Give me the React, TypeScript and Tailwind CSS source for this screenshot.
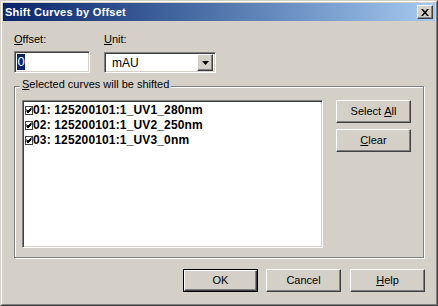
import React from 'react';

const raised =
  'border border-t-white border-l-white border-r-[#404040] border-b-[#404040] shadow-[inset_-1px_-1px_0_#808080] bg-[#d4d0c8]';
const sunken =
  'border border-t-[#808080] border-l-[#808080] border-r-white border-b-white shadow-[inset_1px_1px_0_#404040,inset_-1px_-1px_0_#d4d0c8]';

const curves = ['01: 125200101:1_UV1_280nm', '02: 125200101:1_UV2_250nm', '03: 125200101:1_UV3_0nm'];

const Btn: React.FC<{ children: React.ReactNode; className?: string }> = ({ children, className = '' }) => (
  <div className={`w-[75px] h-[23px] flex items-center justify-center leading-none ${raised} ${className}`}>
    {children}
  </div>
);

const Check = () => (
  <svg width="8" height="9" viewBox="0 0 8 9" className="shrink-0">
    <rect x="0.5" y="0.5" width="7" height="8" fill="white" stroke="#404040" />
    <path d="M1.5 3.5 L3 5 L6.5 1.5 M1.5 4.5 L3 6 L6.5 2.5 M1.5 5.5 L3 7 L6.5 3.5" stroke="black" strokeWidth="1" fill="none" />
  </svg>
);

export default function App() {
  return (
    <div className="w-[438px] h-[306px] bg-[#d4d0c8] font-['Liberation_Sans',Arial,sans-serif] text-[11px] text-black border border-t-[#d4d0c8] border-l-[#d4d0c8] border-r-[#404040] border-b-[#404040] select-none">
      <div className="h-full border border-t-white border-l-white border-r-[#808080] border-b-[#808080] p-px flex flex-col">
        {/* title bar */}
        <div className="h-[18px] shrink-0 flex items-center justify-between px-[2px] bg-gradient-to-r from-[#0a246a] to-[#a6caf0]">
          <span className="text-white font-bold text-[11px] tracking-[0.25px] leading-none">Shift Curves by Offset</span>
          <div className={`w-[16px] h-[14px] flex items-center justify-center ${raised}`}>
            <svg width="8" height="7" viewBox="0 0 8 7">
              <path d="M0 0 L2 0 L4 2.5 L6 0 L8 0 L5 3.5 L8 7 L6 7 L4 4.5 L2 7 L0 7 L3 3.5 Z" fill="black" />
            </svg>
          </div>
        </div>

        {/* offset / unit */}
        <div className="flex items-start mt-[12px] ml-[11px] gap-[14px]">
          <div className="flex flex-col">
            <span className="leading-[13px]">
              <u>O</u>ffset:
            </span>
            <div className={`mt-[5px] w-[76px] h-[22px] bg-white flex items-center pl-[2px] ${sunken}`}>
              <span className="bg-[#0a246a] text-white w-[8px] text-center leading-[16px] text-[13px]">0</span>
            </div>
          </div>
          <div className="flex flex-col">
            <span className="leading-[13px]">
              <u>U</u>nit:
            </span>
            <div className={`mt-[6px] w-[112px] h-[21px] bg-white flex items-center justify-between ${sunken} p-[2px]`}>
              <span className="pl-[5px] text-[12px]">mAU</span>
              <div className={`w-[16px] h-[17px] flex items-center justify-center ${raised}`}>
                <svg width="7" height="4" viewBox="0 0 7 4">
                  <path d="M0 0 H7 L3.5 4 Z" fill="black" />
                </svg>
              </div>
            </div>
          </div>
        </div>

        {/* group box */}
        <div className="relative mt-[13px] ml-[11px] w-[410px] h-[172px] border border-[#808080] shadow-[inset_1px_1px_0_white,1px_1px_0_white] pl-[7px] pt-[13px] flex gap-[13px]">
          <span className="absolute left-[5px] top-[-9px] bg-[#d4d0c8] px-[2px] leading-[13px]">
            <u>S</u>elected curves will be shifted
          </span>
          <div className={`w-[301px] h-[148px] bg-white ${sunken} p-[2px] flex flex-col`}>
            {curves.map((c) => (
              <div key={c} className="flex items-center h-[15px]">
                <Check />
                <span className="font-bold text-[12px] tracking-[0.15px] leading-[15px]">{c}</span>
              </div>
            ))}
          </div>
          <div className="flex flex-col gap-[6px]">
            <Btn>
              Select&nbsp;<u>A</u>ll
            </Btn>
            <Btn>
              <u>C</u>lear
            </Btn>
          </div>
        </div>

        {/* bottom buttons */}
        <div className="flex justify-end mt-[11px] mr-[10px]">
          <div className="w-[75px] h-[23px] border border-black">
            <div className={`w-full h-full flex items-center justify-center leading-none ${raised}`}>OK</div>
          </div>
          <Btn className="ml-[8px]">Cancel</Btn>
          <Btn className="ml-[9px]">
            <u>H</u>elp
          </Btn>
        </div>
      </div>
    </div>
  );
}
